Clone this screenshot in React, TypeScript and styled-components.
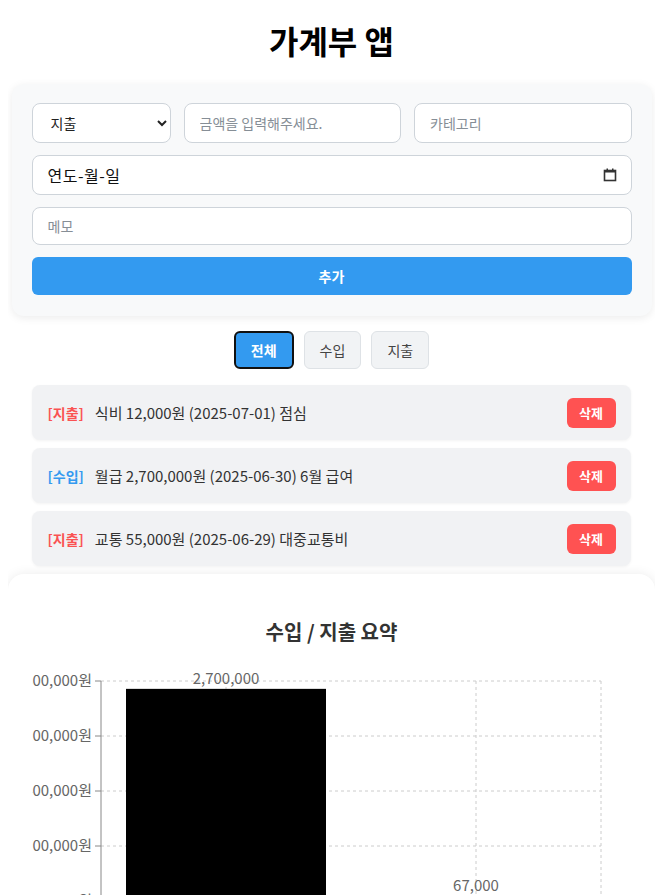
import React from "react";
import styled, { createGlobalStyle } from "styled-components";

const Global = createGlobalStyle`
  html, body { background: #ffffff; }
  body {
    margin: 8px;
    font-family: "Noto Sans CJK KR", "Noto Sans", sans-serif;
    color: #222;
  }
  * { box-sizing: border-box; }
`;

const Container = styled.div`
  max-width: 640px;
  margin: 0 auto;
`;

const Title = styled.h1`
  text-align: center;
  font-size: 32px;
  line-height: 42px;
  font-weight: 700;
  margin: 11px 0 23px;
  color: #000;
`;

const FormCard = styled.div`
  background: #f8f9fa;
  border-radius: 12px;
  padding: 19px 20px 21px;
  box-shadow: 0 2px 8px rgba(0, 0, 0, 0.08);
  display: flex;
  flex-direction: column;
  gap: 12px;
`;

const TopRow = styled.div`
  display: grid;
  grid-template-columns: 139px 1fr 1fr;
  gap: 13px;
`;

const fieldBase = `
  height: 40px;
  border: 1px solid #ced4da;
  border-radius: 8px;
  background: #fff;
  font-family: inherit;
  font-size: 14px;
  color: #222;
  outline: none;
`;

const Select = styled.select`
  ${fieldBase}
  padding: 0 6px 0 14px;
`;

const TextInput = styled.input<{ $h?: number }>`
  ${fieldBase}
  height: ${(p) => p.$h ?? 40}px;
  padding: 0 15px;
  width: 100%;
  &::placeholder { color: #868e96; }
`;

const DateField = styled.div`
  ${fieldBase}
  display: flex;
  align-items: center;
  justify-content: space-between;
  padding: 0 14px 0 15px;
  font-size: 16px;
  letter-spacing: 0.5px;
  color: #111;
`;

const AddButton = styled.button`
  height: 38px;
  border: none;
  border-radius: 6px;
  background: #339af0;
  color: #fff;
  font-family: inherit;
  font-size: 14px;
  font-weight: 700;
`;

const FilterBar = styled.div`
  display: flex;
  justify-content: center;
  gap: 10px;
  margin: 15px 0 16px;
`;

const FilterButton = styled.button<{ $active?: boolean }>`
  height: 38px;
  padding: 0 15px;
  border-radius: 6px;
  font-family: inherit;
  font-size: 14px;
  border: ${(p) => (p.$active ? "2px solid #111" : "1px solid #dee2e6")};
  background: ${(p) => (p.$active ? "#339af0" : "#f1f3f5")};
  color: ${(p) => (p.$active ? "#fff" : "#444")};
  font-weight: ${(p) => (p.$active ? 700 : 400)};
`;

const List = styled.ul`
  list-style: none;
  margin: 0;
  padding: 0 21px 0 20px;
  display: flex;
  flex-direction: column;
  gap: 8px;
`;

const Item = styled.li`
  height: 55px;
  display: flex;
  align-items: center;
  justify-content: space-between;
  padding: 0 15px 0 16px;
  background: #f1f2f4;
  border-radius: 8px;
  box-shadow: 0 1px 3px rgba(0, 0, 0, 0.05);
  font-size: 15px;
  color: #333;
`;

const ItemText = styled.span`
  display: flex;
  align-items: center;
  gap: 11px;
`;

const TypeTag = styled.strong<{ $income?: boolean }>`
  font-size: 14px;
  font-weight: 700;
  color: ${(p) => (p.$income ? "#339af0" : "#fa5252")};
`;

const DeleteButton = styled.button`
  width: 49px;
  height: 30px;
  border: none;
  border-radius: 6px;
  background: #ff5252;
  color: #fff;
  font-family: inherit;
  font-size: 13px;
  font-weight: 700;
  padding: 0;
`;

const ChartCard = styled.section`
  margin-top: 8px;
  background: #fff;
  border-radius: 16px;
  padding: 24px;
  box-shadow: 0 0 12px rgba(0, 0, 0, 0.08);
`;

const ChartTitle = styled.h3`
  text-align: center;
  font-size: 20px;
  line-height: 29px;
  font-weight: 700;
  color: #333;
  margin: 19px 0 22px;
`;

const ChartSvg = styled.svg`
  display: block;
  overflow: hidden;
`;

const items = [
  { income: false, text: "식비 12,000원 (2025-07-01) 점심" },
  { income: true, text: "월급 2,700,000원 (2025-06-30) 6월 급여" },
  { income: false, text: "교통 55,000원 (2025-06-29) 대중교통비" },
];

const CalendarIcon = () => (
  <svg width="14" height="14" viewBox="0 0 14 14">
    <rect x="1.5" y="2.5" width="11" height="10" fill="none" stroke="#333" strokeWidth="1.6" />
    <rect x="1.5" y="2" width="11" height="2.5" fill="#333" />
    <rect x="3.5" y="0.5" width="1.5" height="2" fill="#333" />
    <rect x="9" y="0.5" width="1.5" height="2" fill="#333" />
  </svg>
);

const Chart = () => {
  const W = 599;
  const left = 69;
  const right = 569;
  const base = 233;
  const step = 55;
  const ticks = ["0원", "700,000원", "1,400,000원", "2,100,000원", "2,800,000원"];
  const max = 2800000;
  const h = (v: number) => (v / max) * (step * 4);
  const bars = [
    { v: 2700000, label: "2,700,000", cx: 194 },
    { v: 67000, label: "67,000", cx: 444 },
  ];
  return (
    <ChartSvg width={W} height={300} viewBox={`0 0 ${W} 300`}>
      {ticks.map((_, i) => (
        <line
          key={"h" + i}
          x1={left}
          x2={right}
          y1={base - i * step}
          y2={base - i * step}
          stroke="#ccc"
          strokeDasharray="3 3"
        />
      ))}
      {[194, 444, right].map((x) => (
        <line key={"v" + x} x1={x} x2={x} y1={base - 4 * step} y2={base} stroke="#ccc" strokeDasharray="3 3" />
      ))}
      {bars.map((b) => (
        <rect key={b.label} x={b.cx - 100} y={base - h(b.v)} width={200} height={h(b.v)} fill="#000" />
      ))}
      {bars.map((b) => (
        <text
          key={"l" + b.label}
          x={b.cx}
          y={base - h(b.v) - 5}
          textAnchor="middle"
          fontSize="15"
          fill="#666"
        >
          {b.label}
        </text>
      ))}
      <line x1={left} x2={left} y1={base - 4 * step} y2={base + 60} stroke="#888" />
      {ticks.map((t, i) => (
        <g key={"t" + i}>
          <line x1={left - 6} x2={left} y1={base - i * step} y2={base - i * step} stroke="#888" />
          <text x={left - 9} y={base - i * step + 5} textAnchor="end" fontSize="15" fill="#666">
            {t}
          </text>
        </g>
      ))}
    </ChartSvg>
  );
};

export default function App() {
  return (
    <>
      <Global />
      <Container>
        <Title>가계부 앱</Title>
        <FormCard>
          <TopRow>
            <Select defaultValue="expense">
              <option value="expense">지출</option>
              <option value="income">수입</option>
            </Select>
            <TextInput placeholder="금액을 입력해주세요." />
            <TextInput placeholder="카테고리" />
          </TopRow>
          <DateField>
            <span>연도-월-일</span>
            <CalendarIcon />
          </DateField>
          <TextInput $h={38} placeholder="메모" />
          <AddButton>추가</AddButton>
        </FormCard>
        <FilterBar>
          <FilterButton $active>전체</FilterButton>
          <FilterButton>수입</FilterButton>
          <FilterButton>지출</FilterButton>
        </FilterBar>
        <List>
          {items.map((it, i) => (
            <Item key={i}>
              <ItemText>
                <TypeTag $income={it.income}>[{it.income ? "수입" : "지출"}]</TypeTag>
                <span>{it.text}</span>
              </ItemText>
              <DeleteButton>삭제</DeleteButton>
            </Item>
          ))}
        </List>
      </Container>
      <ChartCard>
        <ChartTitle>수입 / 지출 요약</ChartTitle>
        <Chart />
      </ChartCard>
    </>
  );
}
